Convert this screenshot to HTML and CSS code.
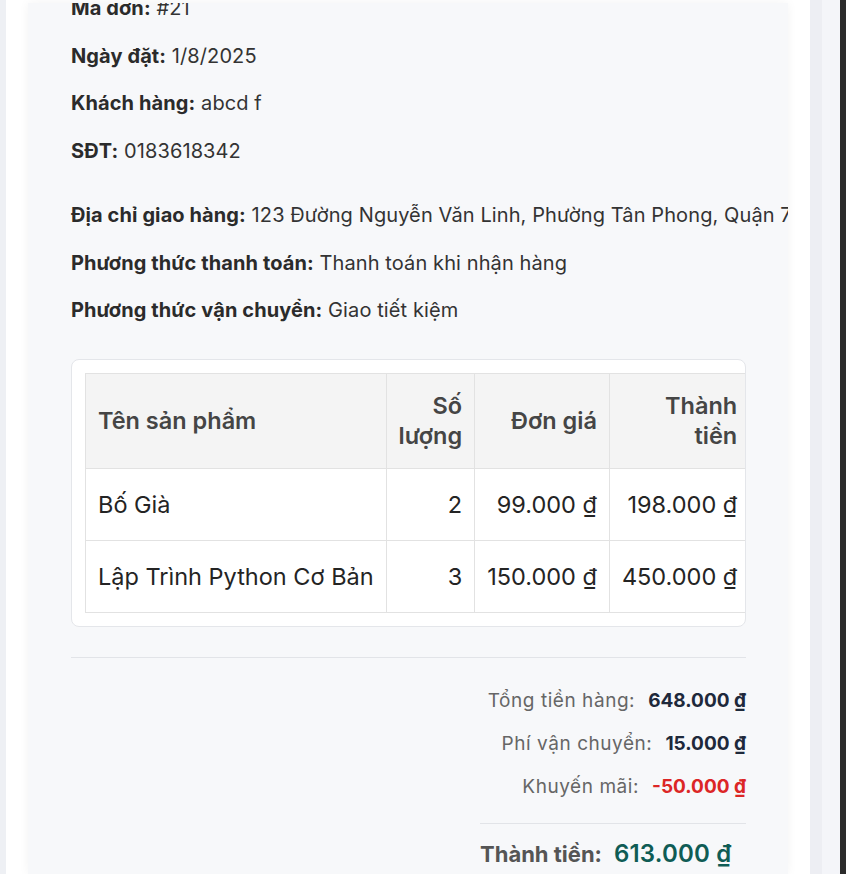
FILE: index.html
```html
<!DOCTYPE html>
<html lang="vi">
<head>
<meta charset="utf-8">
<title>Chi tiết đơn hàng</title>
<link rel="stylesheet" href="styles.css">
</head>
<body>
  <div class="edge"></div>
  <div class="modal">
    <div class="panel">
      <div class="content">
        <section class="info-group">
          <p class="info-line"><strong>Mã đơn:</strong> #21</p>
          <p class="info-line"><strong>Ngày đặt:</strong> 1/8/2025</p>
          <p class="info-line"><strong>Khách hàng:</strong> abcd f</p>
          <p class="info-line"><strong>SĐT:</strong> 0183618342</p>
        </section>
        <section class="info-group">
          <p class="info-line nowrap"><strong>Địa chỉ giao hàng:</strong> 123 Đường Nguyễn Văn Linh, Phường Tân Phong, Quận 7, TP. Hồ Chí Minh</p>
          <p class="info-line"><strong>Phương thức thanh toán:</strong> Thanh toán khi nhận hàng</p>
          <p class="info-line"><strong>Phương thức vận chuyển:</strong> Giao tiết kiệm</p>
        </section>

        <div class="table-card">
          <table class="items">
            <thead>
              <tr>
                <th class="left">Tên sản phẩm</th>
                <th>Số lượng</th>
                <th>Đơn giá</th>
                <th>Thành tiền</th>
              </tr>
            </thead>
            <tbody>
              <tr>
                <td class="left">Bố Già</td>
                <td>2</td>
                <td>99.000 ₫</td>
                <td>198.000 ₫</td>
              </tr>
              <tr>
                <td class="left">Lập Trình Python Cơ Bản</td>
                <td>3</td>
                <td>150.000 ₫</td>
                <td>450.000 ₫</td>
              </tr>
            </tbody>
          </table>
        </div>

        <div class="summary">
          <div class="sum-row"><span class="sum-label">Tổng tiền hàng:</span><span class="sum-value">648.000 ₫</span></div>
          <div class="sum-row"><span class="sum-label">Phí vận chuyển:</span><span class="sum-value">15.000 ₫</span></div>
          <div class="sum-row"><span class="sum-label">Khuyến mãi:</span><span class="sum-value discount">-50.000 ₫</span></div>
          <div class="total">
            <span class="total-label">Thành tiền:</span>
            <span class="total-value">613.000 ₫</span>
          </div>
        </div>
      </div>
    </div>
  </div>
  <div class="gutter"></div>
  <div class="scrollbar"></div>
</body>
</html>
```
FILE: styles.css
```css
html, body {
  margin: 0;
  padding: 0;
}

body {
  display: flex;
  height: 874px;
  overflow: hidden;
  background: #eef0f4;
  font-family: Inter, "Noto Sans", sans-serif;
  color: #2d2d2d;
}

.edge {
  width: 6px;
  flex: none;
}

.modal {
  width: 804px;
  flex: none;
  box-sizing: border-box;
  background: #ffffff;
  padding: 3px 22px 0;
  height: 100%;
}

.panel {
  height: 100%;
  box-sizing: border-box;
  background: #f7f8fa;
  box-shadow: 0 0 10px rgba(0, 0, 0, 0.05);
  padding: 0 42px 0 43px;
  overflow: hidden;
}

.content {
  margin-top: -10px;
}

.info-group {
  display: flex;
  flex-direction: column;
  gap: 17.5px;
  margin-bottom: 34.5px;
}

.info-group + .info-group {
  margin-bottom: 34px;
}

.info-line {
  margin: 0;
  font-size: 20px;
  line-height: 30px;
  letter-spacing: 0.1px;
  color: #333333;
}

.info-line strong {
  font-weight: 700;
  color: #2b2b2b;
}

.nowrap {
  white-space: nowrap;
}

.table-card {
  background: #ffffff;
  border: 1px solid #e4e6ea;
  border-radius: 8px;
  padding: 13px;
  overflow: hidden;
}

.items {
  width: 100%;
  border-collapse: collapse;
  font-size: 23.5px;
  line-height: 30px;
}

.items th,
.items td {
  border: 1px solid #e2e2e2;
  text-align: right;
  padding: 0 12px;
}

.items th {
  background: #f4f4f4;
  color: #454545;
  font-weight: 600;
  padding-top: 17px;
  padding-bottom: 17px;
  vertical-align: middle;
}

.items td {
  color: #242424;
  font-weight: 400;
  white-space: nowrap;
  padding-top: 20.5px;
  padding-bottom: 20.5px;
}

.items .left {
  text-align: left;
}

.summary {
  margin-top: 30px;
  border-top: 1px solid #e2e4e8;
  padding-top: 29px;
  display: flex;
  flex-direction: column;
  align-items: flex-end;
  gap: 15px;
}

.sum-row {
  display: flex;
  align-items: baseline;
  gap: 13px;
  line-height: 28px;
}

.sum-label {
  font-size: 19px;
  letter-spacing: 0.55px;
  color: #666666;
}

.sum-value {
  font-size: 19px;
  font-weight: 700;
  color: #1e293b;
}

.sum-value.discount {
  color: #dc2626;
}

.total {
  width: 266px;
  margin-top: 7px;
  border-top: 1px solid #e2e4e8;
  padding-top: 14px;
  display: flex;
  align-items: baseline;
  gap: 12px;
  line-height: 32px;
}

.total-label {
  font-size: 22px;
  font-weight: 700;
  color: #555555;
}

.total-value {
  font-size: 24px;
  font-weight: 600;
  letter-spacing: 0.2px;
  color: #0f5c55;
}

.gutter {
  width: 30px;
  flex: none;
  background: linear-gradient(to right, #edeef3 12px, #f4f5f9 12px);
}

.scrollbar {
  width: 6px;
  flex: none;
  background: #2b2b2b;
}
```
